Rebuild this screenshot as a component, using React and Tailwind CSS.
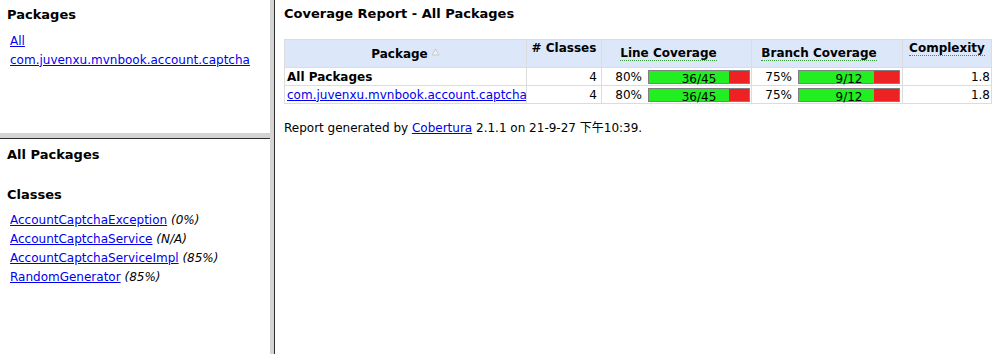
import React from "react";

const FONT = { fontFamily: '"DejaVu Sans", Verdana, "Noto Sans CJK SC", sans-serif' };

function LinkRow({ children }) {
  return <div className="h-[19px] flex items-center pl-[10px] whitespace-nowrap">{children}</div>;
}

function A({ children, bold }) {
  return (
    <a href="#" className={"text-[#0000ee] underline " + (bold ? "font-bold" : "")}>
      {children}
    </a>
  );
}

function Bar({ pct, text }) {
  return (
    <div className="relative w-[102px] h-[14px] border border-[#808080] bg-[#ee2222]">
      <div className="h-full bg-[#22ee22]" style={{ width: pct + "px" }} />
      <span className="absolute left-0 top-[1px] w-[100px] text-center leading-[14px] text-[12px] whitespace-nowrap">
        {text}
      </span>
    </div>
  );
}

function Row({ name, link, bold }) {
  const cell = "border-r border-b border-[#dcdcdc] flex items-center";
  return (
    <>
      <div className={cell + " pl-[2px] h-[18px] overflow-hidden whitespace-nowrap"}>
        {link ? <A>{name}</A> : <span className={bold ? "font-bold" : ""}>{name}</span>}
      </div>
      <div className={cell + " justify-end pr-[4px]"}>4</div>
      <div className={cell + " justify-end pr-[1px] gap-[6px]"}>
        <span>80%</span>
        <Bar pct={80} text="36/45" />
      </div>
      <div className={cell + " justify-end pr-[2px] gap-[6px]"}>
        <span>75%</span>
        <Bar pct={75} text="9/12" />
      </div>
      <div className={cell + " justify-end pr-[1px]"}>1.8</div>
    </>
  );
}

export default function App() {
  const th = "border-r border-b border-[#dcdcdc] bg-[#dce8fa] font-bold text-[12px]";
  return (
    <div className="w-[999px] h-[354px] flex bg-white text-black overflow-hidden text-[12px]" style={FONT}>
      <div className="w-[270px] flex flex-col">
        <div className="h-[133px]">
          <div className="mt-[7px] pl-[7px] font-bold text-[13px] leading-[15px]">Packages</div>
          <div className="mt-[9px] leading-[14px]">
            <LinkRow><A>All</A></LinkRow>
            <LinkRow><A>com.juvenxu.mvnbook.account.captcha</A></LinkRow>
          </div>
        </div>
        <div className="h-[5px] bg-[#d4d4d4]" />
        <div className="h-[1px] bg-[#2e2e2e]" />
        <div className="flex-1">
          <div className="mt-[8px] pl-[7px] font-bold text-[13px] leading-[15px]">All Packages</div>
          <div className="mt-[25px] pl-[7px] font-bold text-[13px] leading-[15px]">Classes</div>
          <div className="mt-[8px] leading-[14px]">
            <LinkRow><A>AccountCaptchaException</A>&nbsp;<i>(0%)</i></LinkRow>
            <LinkRow><A>AccountCaptchaService</A>&nbsp;<i>(N/A)</i></LinkRow>
            <LinkRow><A>AccountCaptchaServiceImpl</A>&nbsp;<i>(85%)</i></LinkRow>
            <LinkRow><A>RandomGenerator</A>&nbsp;<i>(85%)</i></LinkRow>
          </div>
        </div>
      </div>
      <div className="w-[4px] bg-[#d4d4d4]" />
      <div className="w-[1px] bg-[#2e2e2e]" />
      <div className="flex-1 pl-[9px]">
        <div className="mt-[6px] font-bold text-[13px] leading-[15px]">Coverage Report - All Packages</div>
        <div className="mt-[18px] w-[708px] grid grid-cols-[242px_75px_150px_151px_89px] border-l border-t border-[#dcdcdc] leading-[14px]">
          <div className={th + " h-[28px] flex items-center justify-center"}>
            <span>Package</span>
            <svg width="9" height="8" viewBox="0 0 9 8" className="ml-[3px] mt-[-3px]">
              <path d="M4.5 1 L8 7 L1 7 Z" fill="#eef2f8" stroke="#c8c8c8" strokeWidth="1" />
            </svg>
          </div>
          <div className={th + " text-center pt-[1px]"}># Classes</div>
          <div className={th + " flex items-center justify-center pr-[16px]"}>
            <span className="border-b border-dotted border-[#3a9a3a] leading-[13px]">Line Coverage</span>
          </div>
          <div className={th + " flex items-center justify-center pr-[16px]"}>
            <span className="border-b border-dotted border-[#3a9a3a] leading-[13px]">Branch Coverage</span>
          </div>
          <div className={th + " text-center pt-[1px]"}>
            <span className="border-b border-dotted border-[#3a9a3a]">Complexity</span>
          </div>
          <Row name="All Packages" bold />
          <Row name="com.juvenxu.mvnbook.account.captcha" link />
        </div>
        <div className="mt-[17px] leading-[14px]">
          Report generated by <A>Cobertura</A> 2.1.1 on 21-9-27 下午10:39.
        </div>
      </div>
    </div>
  );
}
